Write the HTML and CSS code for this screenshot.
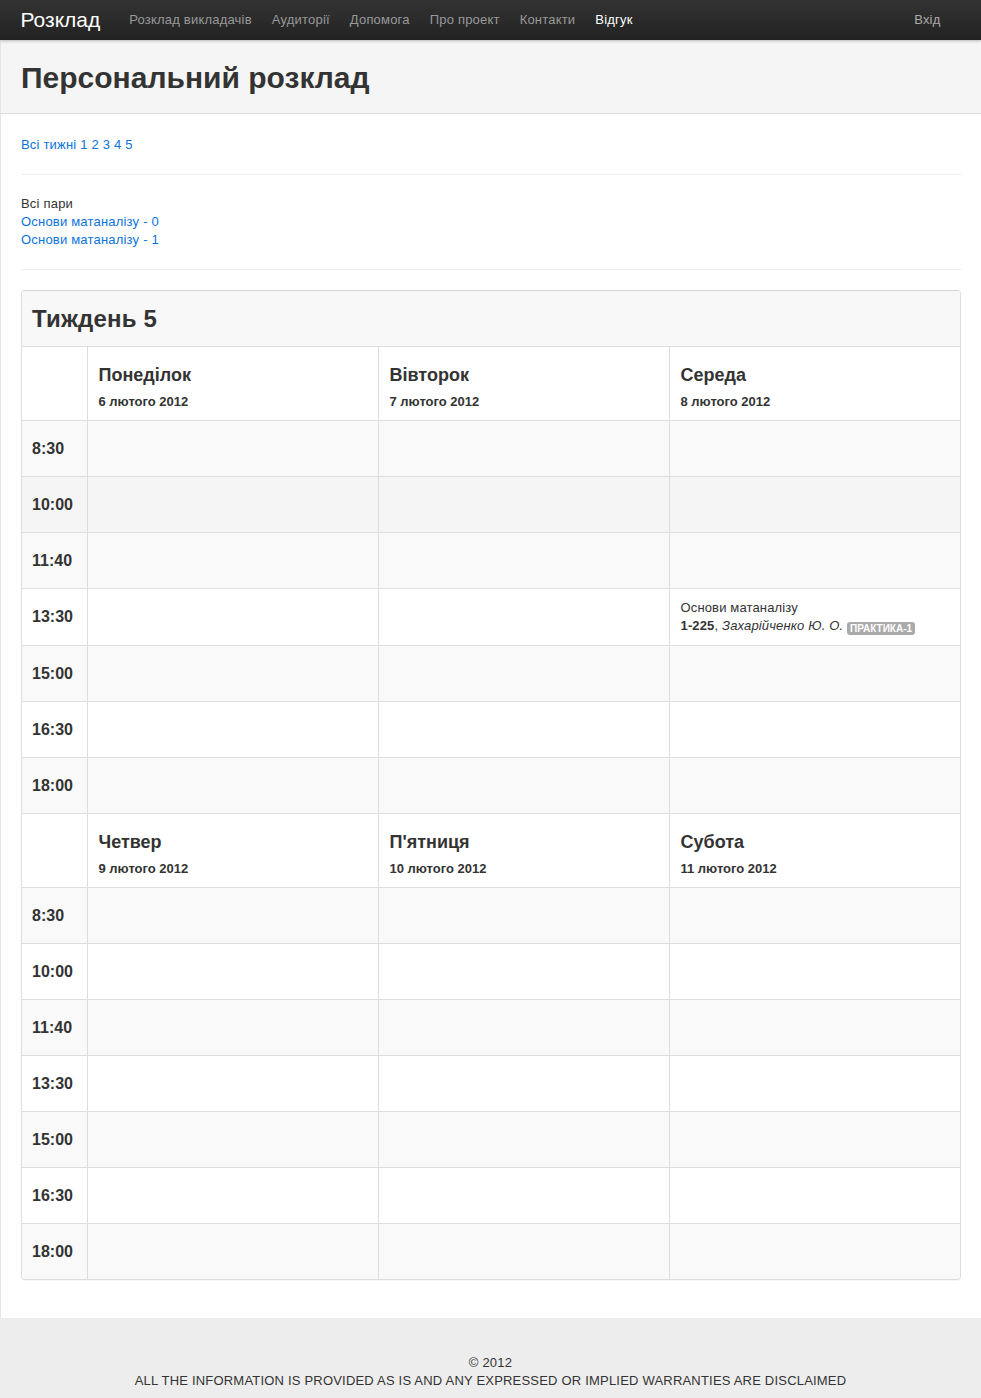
FILE: index.html
```html
<!DOCTYPE html>
<html lang="uk">
<head>
<meta charset="utf-8">
<title>Персональний розклад</title>
<link rel="stylesheet" href="styles.css">
</head>
<body>
<div class="navbar">
  <div class="container nav-inner">
    <a class="brand" href="#">Розклад</a>
    <ul class="nav">
      <li><a href="#">Розклад викладачів</a></li>
      <li><a href="#">Аудиторії</a></li>
      <li><a href="#">Допомога</a></li>
      <li><a href="#">Про проект</a></li>
      <li><a href="#">Контакти</a></li>
      <li class="active"><a href="#">Відгук</a></li>
    </ul>
    <a class="login" href="#">Вхід</a>
  </div>
</div>

<div class="wrap">
  <div class="page-header">
    <div class="container"><h1>Персональний розклад</h1></div>
  </div>

  <div class="container content">
    <p class="weeks"><a href="#">Всі тижні</a> <a href="#">1</a> <a href="#">2</a> <a href="#">3</a> <a href="#">4</a> <a href="#">5</a></p>
    <hr>
    <div class="pairs">
      <div>Всі пари</div>
      <div><a href="#">Основи матаналізу - 0</a></div>
      <div><a href="#">Основи матаналізу - 1</a></div>
    </div>
    <hr>

    <div class="panel">
      <div class="panel-head"><h2>Тиждень 5</h2></div>
      <table class="sched">
        <colgroup><col class="c-time"><col><col><col></colgroup>
        <tbody>
          <tr class="head">
            <td></td>
            <td><div class="day">Понеділок</div><div class="date">6 лютого 2012</div></td>
            <td><div class="day">Вівторок</div><div class="date">7 лютого 2012</div></td>
            <td><div class="day">Середа</div><div class="date">8 лютого 2012</div></td>
          </tr>
        </tbody>
        <tbody class="rows">
          <tr><td class="time">8:30</td><td></td><td></td><td></td></tr>
          <tr class="hover"><td class="time">10:00</td><td></td><td></td><td></td></tr>
          <tr><td class="time">11:40</td><td></td><td></td><td></td></tr>
          <tr><td class="time">13:30</td><td></td><td></td><td class="ev"><div>Основи матаналізу</div><div><b>1-225</b>, <i>Захарійченко Ю. О.</i> <span class="label">Практика-1</span></div></td></tr>
          <tr><td class="time">15:00</td><td></td><td></td><td></td></tr>
          <tr><td class="time">16:30</td><td></td><td></td><td></td></tr>
          <tr><td class="time">18:00</td><td></td><td></td><td></td></tr>
        </tbody>
        <tbody>
          <tr class="head">
            <td></td>
            <td><div class="day">Четвер</div><div class="date">9 лютого 2012</div></td>
            <td><div class="day">П'ятниця</div><div class="date">10 лютого 2012</div></td>
            <td><div class="day">Субота</div><div class="date">11 лютого 2012</div></td>
          </tr>
        </tbody>
        <tbody class="rows">
          <tr><td class="time">8:30</td><td></td><td></td><td></td></tr>
          <tr><td class="time">10:00</td><td></td><td></td><td></td></tr>
          <tr><td class="time">11:40</td><td></td><td></td><td></td></tr>
          <tr><td class="time">13:30</td><td></td><td></td><td></td></tr>
          <tr><td class="time">15:00</td><td></td><td></td><td></td></tr>
          <tr><td class="time">16:30</td><td></td><td></td><td></td></tr>
          <tr><td class="time">18:00</td><td></td><td></td><td></td></tr>
        </tbody>
      </table>
    </div>
  </div>
</div>

<footer class="footer">
  <div>© 2012</div>
  <div>ALL THE INFORMATION IS PROVIDED AS IS AND ANY EXPRESSED OR IMPLIED WARRANTIES ARE DISCLAIMED</div>
</footer>
</body>
</html>
```

FILE: styles.css
```css
html, body {
  margin: 0;
  padding: 0;
}
body {
  font-family: "Liberation Sans", Arial, sans-serif;
  font-size: 13px;
  line-height: 18px;
  color: #333;
  background: #fff;
}
a {
  color: #0b74dc;
  text-decoration: none;
}
.container {
  width: 940px;
  margin: 0 auto;
}

/* navbar */
.navbar {
  height: 40px;
  background: linear-gradient(#333333, #222222);
  box-shadow: 0 1px 3px rgba(0,0,0,.25);
  position: relative;
  z-index: 2;
}
.nav-inner {
  display: flex;
  align-items: center;
  height: 40px;
}
.brand {
  color: #ffffff;
  font-size: 21px;
  line-height: 40px;
  padding-right: 19px;
}
.nav {
  display: flex;
  list-style: none;
  margin: 0;
  padding: 0;
  flex: 1;
}
.nav a {
  display: block;
  padding: 0 10px;
  line-height: 40px;
  color: #999999;
  font-size: 13px;
  letter-spacing: 0.2px;
}
.nav .active a {
  color: #ffffff;
}
.login {
  color: #aaaaaa;
  font-size: 13px;
  line-height: 40px;
  margin-right: 20px;
  letter-spacing: 0.2px;
}

/* wrapper */
.wrap {
  border-left: 1px solid #e5e5e5;
  padding-bottom: 38px;
}
.page-header {
  background: #f5f5f5;
  border-bottom: 1px solid #dddddd;
  height: 73px;
  display: flex;
  align-items: center;
}
.page-header h1 {
  margin: 0;
  font-size: 30px;
  line-height: 36px;
  font-weight: bold;
  color: #333;
  padding-top: 2px;
}

.content {
  padding-top: 22px;
  letter-spacing: 0.2px;
}
.weeks {
  margin: 0;
}
hr {
  border: 0;
  border-top: 1px solid #eeeeee;
  border-bottom: 1px solid #ffffff;
  margin: 20px 0 19px;
}

/* panel */
.panel {
  border: 1px solid #dddddd;
  border-top-color: #d5d5d5;
  border-radius: 4px;
  overflow: hidden;
  box-shadow: 0 1px 1px rgba(0,0,0,.04);
  margin-top: 1px;
  letter-spacing: 0;
}
.panel-head {
  background: #f8f8f8;
  height: 55px;
  display: flex;
  align-items: center;
  padding-left: 10px;
}
.panel-head h2 {
  margin: 0;
  font-size: 24px;
  line-height: 28px;
  font-weight: bold;
  color: #333;
  letter-spacing: 0.2px;
}
.sched {
  width: 100%;
  border-collapse: collapse;
  table-layout: fixed;
}
.c-time {
  width: 65px;
}
.sched td {
  border-top: 1px solid #dddddd;
  border-left: 1px solid #dddddd;
  padding: 10px 10px 10px 11px;
  vertical-align: middle;
  height: 35px;
  box-sizing: content-box;
}
.sched td:first-child {
  border-left: 0;
  padding-left: 10px;
}
.sched .head td {
  background: #fff;
  padding-top: 16px;
  padding-bottom: 9px;
  vertical-align: top;
  height: auto;
}
.day {
  font-size: 18px;
  font-weight: bold;
  line-height: 24px;
  color: #333;
}
.date {
  font-size: 13px;
  font-weight: bold;
  line-height: 18px;
  margin-top: 6px;
}
.rows tr:nth-child(odd) td {
  background: #f9f9f9;
}
.rows tr.hover td {
  background: #f5f5f5;
}
.time {
  font-size: 16px;
  font-weight: bold;
}
.ev {
  line-height: 18px;
  height: auto;
  letter-spacing: 0.15px;
}
.label {
  display: inline-block;
  background: #aaaaaa;
  color: #fff;
  font-size: 10px;
  font-weight: bold;
  line-height: 12px;
  padding: 1px 3px 0;
  border-radius: 3px;
  text-transform: uppercase;
  vertical-align: -2px;
  letter-spacing: 0;
}

/* footer */
.footer {
  background: #ededed;
  text-align: center;
  padding: 36px 0 8px;
  font-size: 13px;
  line-height: 18px;
  color: #333;
  letter-spacing: 0.2px;
}
```
